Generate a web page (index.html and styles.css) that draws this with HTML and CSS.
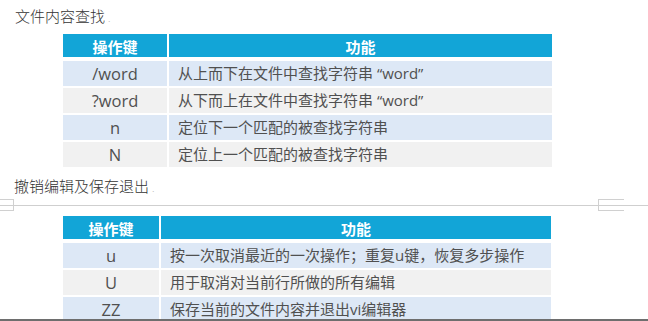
FILE: index.html
```html
<!DOCTYPE html>
<html lang="zh">
<head>
<meta charset="utf-8">
<link rel="stylesheet" href="styles.css">
</head>
<body>
<div class="page">
  <main class="content">
    <p class="title t1">文件内容查找<span class="mark">.</span></p>
    <div class="tbl tbl1">
      <div class="hd">操作键</div><div class="hd">功能</div>
      <div class="c k odd">/word</div><div class="c d odd">从上而下在文件中查找字符串 “word”</div>
      <div class="c k even">?word</div><div class="c d even">从下而上在文件中查找字符串 “word”</div>
      <div class="c k odd">n</div><div class="c d odd">定位下一个匹配的被查找字符串</div>
      <div class="c k even">N</div><div class="c d even">定位上一个匹配的被查找字符串</div>
    </div>
    <p class="title t2">撤销编辑及保存退出<span class="mark">.</span></p>
    <div class="rule">
      <span class="brk brk-l"></span>
      <span class="brk brk-r"></span>
    </div>
    <div class="tbl tbl2">
      <div class="hd">操作键</div><div class="hd">功能</div>
      <div class="c k odd">u</div><div class="c d odd">按一次取消最近的一次操作；重复u键，恢复多步操作</div>
      <div class="c k even">U</div><div class="c d even">用于取消对当前行所做的所有编辑</div>
      <div class="c k odd">ZZ</div><div class="c d odd">保存当前的文件内容并退出vi编辑器</div>
    </div>
  </main>
  <div class="bottom"></div>
</div>
</body>
</html>
```

FILE: styles.css
```css
* { box-sizing: border-box; }
html, body { margin: 0; padding: 0; background: #fff; }
body {
  font-family: "Open Sans", "Noto Sans CJK SC", sans-serif;
  color: #555;
}
.page {
  width: 648px;
  height: 321px;
  display: flex;
  flex-direction: column;
  overflow: hidden;
}
.content {
  flex: 1;
  overflow: hidden;
}
.bottom {
  height: 2px;
  background: #6e6e6e;
}
.title {
  margin: 0;
  font-size: 15px;
  line-height: 18px;
  color: #333;
  font-family: "Noto Sans CJK SC", sans-serif;
  font-weight: 300;
}
.t1 { padding: 7px 0 0 15px; }
.t2 { padding: 10px 0 0 14px; }
.mark { color: #bbb; font-size: 10px; margin-left: 3px; }
.tbl {
  display: grid;
  row-gap: 2px;
  column-gap: 2px;
  margin-left: 63px;
  font-size: 15px;
}
.tbl1 {
  width: 489px;
  grid-template-columns: 104px 1fr;
  grid-auto-rows: 25px;
  margin-top: 7px;
}
.tbl2 {
  width: 488px;
  grid-template-columns: 96px 1fr;
  grid-auto-rows: 25px;
  margin-top: 10px;
}
.hd {
  background: #12a5d7;
  color: #fff;
  font-weight: bold;
  text-align: center;
  line-height: 25px;
  font-family: "Noto Sans CJK SC", sans-serif;
  margin-bottom: 2px;
}
.c {
  line-height: 25px;
  white-space: nowrap;
  color: #505050;
}
.k { text-align: center; font-size: 16.5px; }
.d { padding-left: 9px; }
.odd { background: #dde8f6; }
.even { background: #f1f1f1; }
.rule {
  position: relative;
  height: 1px;
  margin-top: 8px;
  background: #cfcfcf;
}
.brk {
  position: absolute;
  border: 1px solid #d0d0d0;
}
.brk-l {
  left: -1px;
  top: -6px;
  width: 15px;
  height: 12px;
}
.brk-r {
  left: 598px;
  top: -6px;
  width: 26px;
  height: 12px;
  border-right: none;
}
```
